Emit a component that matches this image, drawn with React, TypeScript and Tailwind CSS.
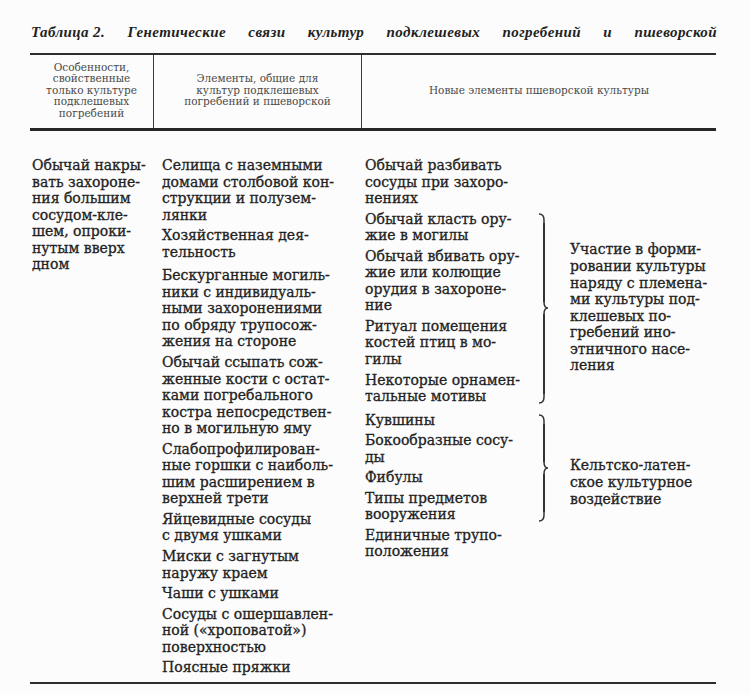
import React from 'react';

const serif = { fontFamily: '"DejaVu Serif", "Liberation Serif", serif' };

const col1 = ['Обычай накры-', 'вать захороне-', 'ния большим', 'сосудом-кле-', 'шем, опроки-', 'нутым вверх', 'дном'];

const col2: string[][] = [
  ['Селища с наземными', 'домами столбовой кон-', 'струкции и полузем-', 'лянки'],
  ['Хозяйственная дея-', 'тельность'],
  ['Бескурганные могиль-', 'ники с индивидуаль-', 'ными захоронениями', 'по обряду трупосож-', 'жения на стороне'],
  ['Обычай ссыпать сож-', 'женные кости с остат-', 'ками погребального', 'костра непосредствен-', 'но в могильную яму'],
  ['Слабопрофилирован-', 'ные горшки с наиболь-', 'шим расширением в', 'верхней трети'],
  ['Яйцевидные сосуды', 'с двумя ушками'],
  ['Миски с загнутым', 'наружу краем'],
  ['Чаши с ушками'],
  ['Сосуды с ошершавлен-', 'ной («хроповатой»)', 'поверхностью'],
  ['Поясные пряжки'],
];

const groupA: string[][] = [
  ['Обычай класть ору-', 'жие в могилы'],
  ['Обычай вбивать ору-', 'жие или колющие', 'орудия в захороне-', 'ние'],
  ['Ритуал помещения', 'костей птиц в мо-', 'гилы'],
  ['Некоторые орнамен-', 'тальные мотивы'],
];

const groupB: string[][] = [
  ['Кувшины'],
  ['Бокообразные сосу-', 'ды'],
  ['Фибулы'],
  ['Типы предметов', 'вооружения'],
];

const Item = ({ lines }: { lines: string[] }) => (
  <div>
    {lines.map((l, i) => (
      <div key={i} className="whitespace-nowrap">{l}</div>
    ))}
  </div>
);

const Brace = () => (
  <div className="flex flex-col items-center w-[14px] self-stretch pt-[2px] pb-[1px]">
    <svg width="14" height="10" viewBox="0 0 14 10" className="shrink-0">
      <path d="M2 1 C6 1 7 3 7 7 L7 10" fill="none" stroke="#333" strokeWidth="1.5" />
    </svg>
    <div className="flex-1 w-[1.5px] bg-[#333]" />
    <svg width="14" height="12" viewBox="0 0 14 12" className="shrink-0">
      <path d="M7 0 C7 4 8 6 11 6 C8 6 7 8 7 12" fill="none" stroke="#333" strokeWidth="1.5" />
    </svg>
    <div className="flex-1 w-[1.5px] bg-[#333]" />
    <svg width="14" height="10" viewBox="0 0 14 10" className="shrink-0">
      <path d="M7 0 L7 3 C7 7 6 9 2 9" fill="none" stroke="#333" strokeWidth="1.5" />
    </svg>
  </div>
);

export default function App() {
  return (
    <div className="w-[750px] h-[695px] bg-[#fcfcfc] text-[#222] overflow-hidden" style={serif}>
      <div
        className="ml-[31px] w-[686px] pt-[22px] leading-[20px] text-[15px] tracking-[0.4px] italic font-bold text-justify [text-align-last:justify] text-[#222]"
        style={{ fontFamily: '"Liberation Serif", serif' }}
      >
        <span className="inline-block">Таблица 2.</span> Генетические связи культур подклешевых погребений и пшеворской
      </div>

      <div className="ml-[30px] w-[686px] mt-[11px] border-t-2 border-[#2e2e2e]">
        <div className="flex h-[76px] border-b-[3px] border-[#262626] text-[10.5px] leading-[11.5px] text-[#4a4a4a] text-center">
          <div className="w-[124px] border-r-[1.5px] border-[#3a3a3a] flex flex-col justify-center pb-[2px]">
            <div>Особенности,</div>
            <div>свойственные</div>
            <div>только культуре</div>
            <div>подклешевых</div>
            <div>погребений</div>
          </div>
          <div className="w-[208px] border-r-[1.5px] border-[#3a3a3a] flex flex-col justify-center pb-[2px]">
            <div>Элементы, общие для</div>
            <div>культур подклешевых</div>
            <div>погребений и пшеворской</div>
          </div>
          <div className="flex-1 flex flex-col justify-center pb-[2px]">
            <div>Новые элементы пшеворской культуры</div>
          </div>
        </div>

        <div className="flex pt-[26px] pb-[6px] border-b-2 border-[#2e2e2e] text-[14px] leading-[16.55px] [-webkit-text-stroke:0.3px_#222]">
          <div className="w-[132px] pl-[2px]">
            <Item lines={col1} />
          </div>

          <div className="w-[203px] flex flex-col gap-[4px]">
            {col2.map((it, i) => (
              <div key={i} className={i === 2 ? 'mt-[3px]' : ''}>
                <Item lines={it} />
              </div>
            ))}
          </div>

          <div className="flex-1 flex flex-col gap-[4px]">
            <Item lines={['Обычай разбивать', 'сосуды при захоро-', 'нениях']} />

            <div className="flex">
              <div className="w-[172px] flex flex-col gap-[4px]">
                {groupA.map((it, i) => <Item key={i} lines={it} />)}
              </div>
              <Brace />
              <div className="ml-[19px] self-center">
                <Item lines={['Участие в форми-', 'ровании культуры', 'наряду с племена-', 'ми культуры под-', 'клешевых по-', 'гребений ино-', 'этничного насе-', 'ления']} />
              </div>
            </div>

            <div className="flex mt-[3px]">
              <div className="w-[172px] flex flex-col gap-[4px]">
                {groupB.map((it, i) => <Item key={i} lines={it} />)}
              </div>
              <Brace />
              <div className="ml-[19px] self-center mt-[30px]">
                <Item lines={['Кельтско-латен-', 'ское культурное', 'воздействие']} />
              </div>
            </div>

            <Item lines={['Единичные трупо-', 'положения']} />
          </div>
        </div>
      </div>
    </div>
  );
}
